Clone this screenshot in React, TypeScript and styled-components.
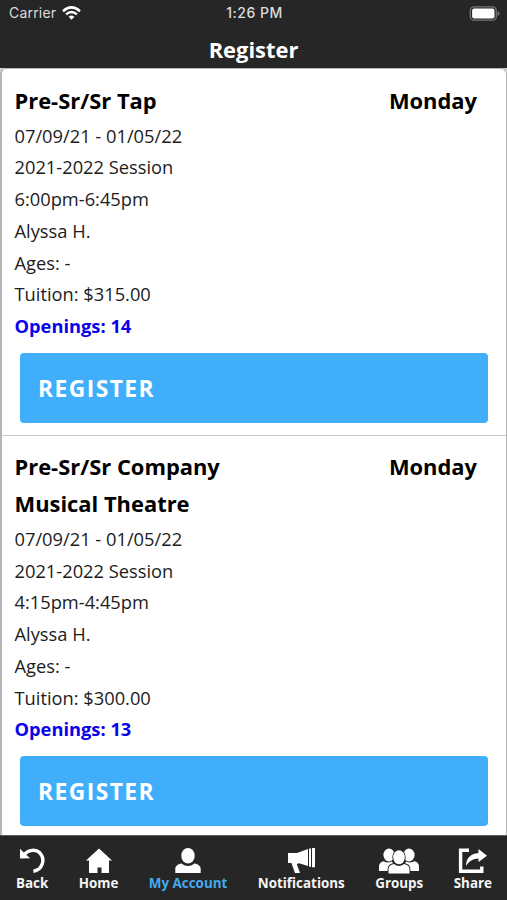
import React from 'react';
import styled, { createGlobalStyle } from 'styled-components';

const GlobalStyle = createGlobalStyle`
  * { box-sizing: border-box; }
  html, body, #root { height: 100%; }
  body {
    margin: 0;
    overflow: hidden;
    background: #262626;
    font-family: 'Open Sans', sans-serif;
  }
`;

const Screen = styled.div`
  display: flex;
  flex-direction: column;
  width: 507px;
  height: 900px;
  overflow: hidden;
  background: #262626;
`;

const StatusBar = styled.div`
  flex: none;
  display: grid;
  grid-template-columns: 1fr auto 1fr;
  align-items: center;
  height: 26px;
  padding: 0 7px 0 9px;
  color: #dcdcdc;
  font: 400 14px/26px Inter, sans-serif;
`;

const Carrier = styled.div`
  display: flex;
  align-items: center;
  gap: 6px;
  letter-spacing: 0.2px;
`;

const Clock = styled.div`
  font-weight: 500;
  font-size: 14px;
  letter-spacing: 0.5px;
`;

const Battery = styled.svg`
  justify-self: end;
  display: block;
`;

const TitleBar = styled.header`
  flex: none;
  height: 42px;
  color: #fff;
  text-align: center;
  font-size: 21.9px;
  font-weight: 700;
  line-height: 48px;
`;

const ListFrame = styled.main`
  flex: none;
  height: 767px;
  background: #d4d4d4;
`;

const List = styled.section`
  height: 100%;
  overflow: hidden;
  background: #fff;
  border: 1px solid #b5b5b5;
  border-width: 1px 1px 0 2px;
  border-radius: 6px 6px 0 0;
`;

const Card = styled.article`
  height: 366.6px;
  padding: 13.6px 17px 0 12.5px;
  border-bottom: 1.5px solid #c6c6c6;
  &:last-child { height: auto; border-bottom: 0; }
`;

const CardHead = styled.div`
  display: flex;
  justify-content: space-between;
  padding-right: 12px;
  margin-bottom: 0.5px;
  font-size: 21.9px;
  font-weight: 700;
  line-height: 36.6px;
  color: #000;
`;

const ClassName = styled.div`
  width: 240px;
`;

const Line = styled.div<{ $open?: boolean }>`
  height: 31.75px;
  font-size: 18.3px;
  line-height: 31.75px;
  color: ${p => (p.$open ? '#0a02ea' : '#1c1c1c')};
  font-weight: ${p => (p.$open ? 700 : 400)};
`;

const RegisterButton = styled.button`
  display: block;
  width: 468px;
  height: 70px;
  margin: 11px 0 0 5.5px;
  padding: 2.5px 0 0 18px;
  border: 0;
  border-radius: 4px;
  background: #40aefb;
  color: #fff;
  text-align: left;
  font: 700 22.8px/32px 'Open Sans', sans-serif;
  letter-spacing: 1.45px;
`;

const TabBar = styled.nav`
  flex: none;
  display: flex;
  justify-content: space-between;
  height: 65px;
  padding: 12px 15px 0 16px;
  border-top: 1px solid #5a5a5a;
`;

const Tab = styled.div<{ $active?: boolean }>`
  display: flex;
  flex-direction: column;
  align-items: center;
  color: ${p => (p.$active ? '#45a9ee' : '#f5f5f5')};
  font-size: 13.4px;
  font-weight: 700;
  line-height: 18px;
  white-space: nowrap;
  svg { display: block; fill: #fff; }
`;

const icons = {
  back: (
    <svg width="26" height="26" viewBox="0 0 26 26">
      <path d="M1 .8 4.2 4 8 7.4 11.2 10.2 1 10.6Z" />
      <path d="M5.4 6.2C9.7 1.8 16.7 .8 20.8 4.8C27 11.5 23 22.3 14.4 23.2" fill="none" stroke="#fff" strokeWidth="3.4" />
    </svg>
  ),
  home: (
    <svg width="26" height="26" viewBox="0 0 26 26">
      <path d="M13 .5 26 12.5H23V25H15.5V19.5H11.5V25H3V12.5H0Z" />
    </svg>
  ),
  account: (
    <svg width="26" height="26" viewBox="0 0 26 26">
      <ellipse cx="13" cy="7.8" rx="6.7" ry="7.8" />
      <path d="M6.5 15.4Q13 20.5 19.5 15.4C23.5 16 25.7 18 25.7 21V25H.3V21C.3 18 2.5 16 6.5 15.4Z" />
    </svg>
  ),
  megaphone: (
    <svg width="27" height="26" viewBox="0 0 27 26">
      <path d="M0 5H9L20 1V18L11 15.2 8.8 16 12 25H7L3.4 15H0Z" />
      <path d="M21 .6h2v18.2h-2zM24 0H27v19.3h-3z" />
    </svg>
  ),
  groups: (
    <svg width="40" height="26" viewBox="0 0 40 26">
      <ellipse cx="10" cy="7" rx="5.6" ry="6.5" />
      <ellipse cx="30" cy="7" rx="5.6" ry="6.5" />
      <path d="M0 23v-4.5c0-3 1.8-4.8 4.8-5.2q4.2 2.5 8 .2l3 4L9 23zM40 23v-4.5c0-3-1.8-4.8-4.8-5.2q-4.2 2.5-8 .2l-3 4L31 23z" />
      <g stroke="#262626" strokeWidth="1.8" paintOrder="stroke">
        <path d="M15 16q5 3.8 10 0 5.5.8 5.5 5.5V25.5H9.5V21.5q0-4.7 5.5-5.5z" />
        <ellipse cx="20" cy="9.3" rx="5.8" ry="7" />
      </g>
    </svg>
  ),
  share: (
    <svg width="29" height="26" viewBox="0 0 29 26">
      <path d="M11 2.2H2.6V23.2H23.8V18.5" fill="none" stroke="#fff" strokeWidth="3.4" />
      <path d="M8 18C8 10.5 12.2 5.8 20.5 5V1L29 7.8 20.5 14V10.5C15 10.5 11 13.3 8 18Z" />
    </svg>
  ),
};

const tabs: { label: string; icon: keyof typeof icons; active?: boolean }[] = [
  { label: 'Back', icon: 'back' },
  { label: 'Home', icon: 'home' },
  { label: 'My Account', icon: 'account', active: true },
  { label: 'Notifications', icon: 'megaphone' },
  { label: 'Groups', icon: 'groups' },
  { label: 'Share', icon: 'share' },
];

const classes = [
  { name: 'Pre-Sr/Sr Tap', time: '6:00pm-6:45pm', tuition: '$315.00', openings: 14 },
  { name: 'Pre-Sr/Sr Company Musical Theatre', time: '4:15pm-4:45pm', tuition: '$300.00', openings: 13 },
];

export default function App() {
  return (
    <Screen>
      <GlobalStyle />
      <StatusBar>
        <Carrier>
          Carrier
          <svg width="19" height="14" viewBox="0 0 19 14">
            <g fill="none" stroke="#fff" strokeWidth="2.5">
              <path d="M1 5.2Q9.5-2.4 18 5.2" />
              <path d="M4.1 8.4Q9.5 3.6 14.9 8.4" />
            </g>
            <path d="M6.6 10.7Q9.5 8.5 12.4 10.7L9.5 13.7Z" fill="#fff" />
          </svg>
        </Carrier>
        <Clock>1:26 PM</Clock>
        <Battery width="31" height="15" viewBox="0 0 31 15">
          <rect x="1.3" y="0.8" width="26" height="13.4" rx="3.8" fill="none" stroke="#777" strokeWidth="1.3" />
          <rect x="3.1" y="2.6" width="22.4" height="9.8" rx="2" fill="#fff" />
          <path d="M28.6 5q2 .8 2 2.5t-2 2.5z" fill="#777" />
        </Battery>
      </StatusBar>
      <TitleBar>Register</TitleBar>
      <ListFrame>
        <List>
          {classes.map(c => (
            <Card key={c.name}>
              <CardHead>
                <ClassName>{c.name}</ClassName>
                <div>Monday</div>
              </CardHead>
              <Line>07/09/21 - 01/05/22</Line>
              <Line>2021-2022 Session</Line>
              <Line>{c.time}</Line>
              <Line>Alyssa H.</Line>
              <Line>Ages: -</Line>
              <Line>Tuition: {c.tuition}</Line>
              <Line $open>Openings: {c.openings}</Line>
              <RegisterButton>REGISTER</RegisterButton>
            </Card>
          ))}
        </List>
      </ListFrame>
      <TabBar>
        {tabs.map(t => (
          <Tab key={t.label} $active={t.active}>
            {icons[t.icon]}
            {t.label}
          </Tab>
        ))}
      </TabBar>
    </Screen>
  );
}
